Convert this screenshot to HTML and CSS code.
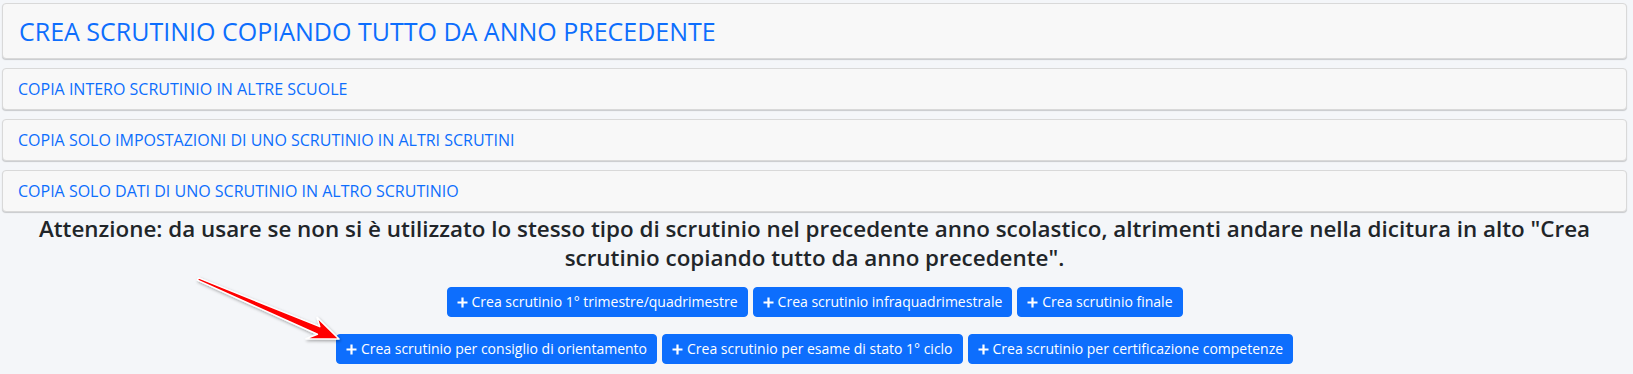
FILE: index.html
```html
<!DOCTYPE html>
<html lang="it">
<head>
<meta charset="utf-8">
<title>Scrutini</title>
<link rel="stylesheet" href="styles.css">
</head>
<body>
<div class="page">
  <div class="panels">
    <div class="panel panel-lg"><a class="panel-link" href="#">CREA SCRUTINIO COPIANDO TUTTO DA ANNO PRECEDENTE</a></div>
    <div class="panel"><a class="panel-link" href="#">COPIA INTERO SCRUTINIO IN ALTRE SCUOLE</a></div>
    <div class="panel"><a class="panel-link" href="#">COPIA SOLO IMPOSTAZIONI DI UNO SCRUTINIO IN ALTRI SCRUTINI</a></div>
    <div class="panel"><a class="panel-link" href="#">COPIA SOLO DATI DI UNO SCRUTINIO IN ALTRO SCRUTINIO</a></div>
  </div>

  <h4 class="notice">Attenzione: da usare se non si è utilizzato lo stesso tipo di scrutinio nel precedente anno scolastico, altrimenti andare nella dicitura in alto "Crea scrutinio copiando tutto da anno precedente".</h4>

  <div class="actions">
    <div class="btn-row">
      <button class="btn"><svg class="plus" viewBox="0 0 11 11"><path d="M5.5 0.5v10M0.5 5.5h10"/></svg>Crea scrutinio 1° trimestre/quadrimestre</button>
      <button class="btn"><svg class="plus" viewBox="0 0 11 11"><path d="M5.5 0.5v10M0.5 5.5h10"/></svg>Crea scrutinio infraquadrimestrale</button>
      <button class="btn"><svg class="plus" viewBox="0 0 11 11"><path d="M5.5 0.5v10M0.5 5.5h10"/></svg>Crea scrutinio finale</button>
    </div>
    <div class="btn-row">
      <button class="btn"><svg class="plus" viewBox="0 0 11 11"><path d="M5.5 0.5v10M0.5 5.5h10"/></svg>Crea scrutinio per consiglio di orientamento</button>
      <button class="btn"><svg class="plus" viewBox="0 0 11 11"><path d="M5.5 0.5v10M0.5 5.5h10"/></svg>Crea scrutinio per esame di stato 1° ciclo</button>
      <button class="btn"><svg class="plus" viewBox="0 0 11 11"><path d="M5.5 0.5v10M0.5 5.5h10"/></svg>Crea scrutinio per certificazione competenze</button>
    </div>
  </div>

  <svg class="arrow" width="160" height="80" viewBox="0 0 160 80">
    <defs>
      <filter id="sh" x="-20%" y="-40%" width="140%" height="180%">
        <feDropShadow dx="1" dy="1.5" stdDeviation="1.5" flood-color="#000" flood-opacity="0.35"/>
      </filter>
    </defs>
    <polygon filter="url(#sh)" points="8.6,7.9 129.8,56.6 127,47.4 149,69 116,68.8 127.4,64.3 7.4,10.1" fill="#ff0000" stroke="#ffffff" stroke-width="1.5" stroke-linejoin="round"/>
  </svg>
</div>
</body>
</html>
```

FILE: styles.css
```css
* { box-sizing: border-box; }

html, body {
  margin: 0;
  padding: 0;
  background: #f4f6f9;
  font-family: "Open Sans", "Noto Sans", "Liberation Sans", sans-serif;
  color: #212529;
}

.page {
  position: relative;
  padding: 3px 6px 0 2px;
  height: 374px;
}

.panels {
  display: flex;
  flex-direction: column;
  gap: 9px;
}

.panel {
  background: #f8f8f8;
  border: 1px solid #d9d9d9;
  border-radius: 4px;
  box-shadow: 0 1px 1px rgba(0, 0, 0, 0.18);
  padding: 10px 15px;
  height: 42px;
  display: flex;
  align-items: center;
}

.panel-lg {
  height: 56px;
  padding: 12px 16px;
}

.panel-link {
  color: #0d6efd;
  text-decoration: none;
  font-size: 16px;
  line-height: 22px;
}

.panel-lg .panel-link {
  font-size: 25px;
  line-height: 30px;
}

.notice {
  margin: 2px 0 0;
  text-align: center;
  font-size: 22.4px;
  line-height: 29px;
  font-weight: 600;
  color: #212529;
}

.actions {
  display: flex;
  flex-direction: column;
  align-items: center;
  gap: 17px;
  margin-top: 15px;
}

.btn-row {
  display: flex;
  gap: 5px;
  justify-content: center;
}

.btn {
  display: inline-flex;
  align-items: center;
  background: #0d6efd;
  color: #ffffff;
  border: 1px solid #0d6efd;
  border-radius: 4px;
  font-family: inherit;
  font-size: 14px;
  line-height: 20px;
  padding: 4px 9px;
  height: 30px;
  cursor: pointer;
}

.plus {
  width: 11px;
  height: 11px;
  margin-right: 4px;
  fill: none;
  stroke: #ffffff;
  stroke-width: 2.2;
}

.arrow {
  position: absolute;
  left: 190px;
  top: 270px;
  overflow: visible;
}
```
